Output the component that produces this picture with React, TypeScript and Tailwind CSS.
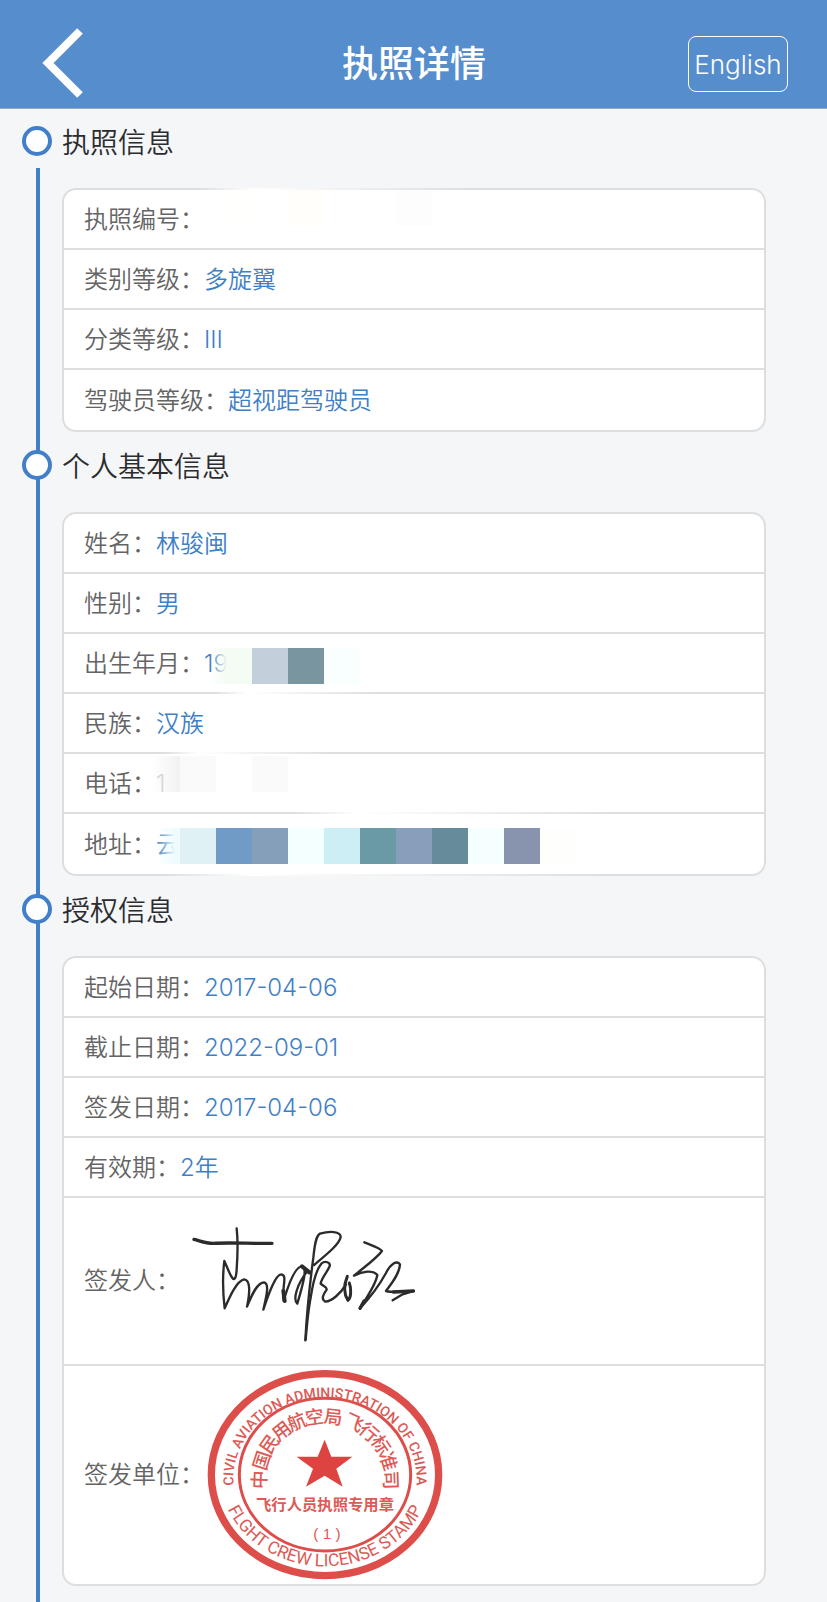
import React from 'react';

type Tile = string | null;

interface Mask {
    tiles: Tile[];
    className: string;
    haze?: string;
}

interface Field {
    label: string;
    value?: string;
    valueClass?: string;
    mask?: Mask;
    smudges?: string[];
    art?: React.ReactNode;
    rowClass?: string;
}

interface Section {
    title: string;
    fields: Field[];
}

function Signature() {
    return (
        <svg viewBox="0 0 780 480" className="w-[260px] h-[160px]" fill="none" stroke="#2b2b2b" strokeLinecap="round" strokeLinejoin="round" role="img" aria-label="签名">
            <path d="M42 115C62 120 76 127 100 127C150 124 210 128 276 127" strokeWidth="10" />
            <path d="M170 82C173 110 174 150 170 205C169 225 166 236 160 234C150 226 143 200 133 180C128 220 129 280 134 322C150 285 170 240 192 235C212 236 210 275 201 317C212 290 230 244 252 244C270 248 258 290 250 326C262 290 285 220 304 220C324 222 304 262 311 299C322 262 344 196 366 196C382 200 372 240 352 308C338 296 350 250 384 208" strokeWidth="7" />
            <path d="M366 196L388 214M310 270L314 300" strokeWidth="12" />
            <path d="M376 418C380 340 392 230 400 170C404 130 408 104 420 98C448 90 482 90 482 108C478 130 440 160 402 192" strokeWidth="7" />
            <path d="M377 416C380 380 386 320 392 290C398 250 410 205 424 188C436 178 452 184 449 196C440 216 424 232 422 248C430 256 442 258 440 266C430 280 422 294 436 302C456 300 480 280 498 250" strokeWidth="7" />
            <path d="M502 226C492 250 490 276 504 298C514 290 514 262 508 246" strokeWidth="9" />
            <path d="M553 124C572 132 600 140 606 150C590 172 556 196 522 224C548 210 580 206 592 222C588 250 560 290 540 322C570 290 596 256 618 216C630 190 650 176 660 190C658 220 634 248 618 270C640 276 672 272 702 270L668 280L638 298" strokeWidth="7" />
            <path d="M540 322L552 300M640 273L700 270" strokeWidth="10" />
        </svg>
    );
}

const SEAL_CHARS: [string, number, number, number][] = [
    ['中', 208, 374, -88],
    ['国', 216, 317, -72],
    ['民', 239, 267, -55],
    ['用', 275, 228, -38],
    ['航', 321, 201, -23],
    ['空', 374, 186, -8],
    ['局', 430, 186, 6],
    ['飞', 492, 203, 25],
    ['行', 537, 232, 40],
    ['标', 573, 270, 56],
    ['准', 595, 319, 73],
    ['司', 602, 375, 88],
];

function Seal() {
    return (
        <svg viewBox="42 45 720 630" className="w-60 h-[210px]" role="img" aria-label="飞行人员执照专用章">
            <defs>
                <path id="seal-top" d="M132 404A275 247 0 1 1 678 404" />
                <path id="seal-bottom" d="M92 400A318 284 0 0 0 718 400" />
            </defs>
            <g fill="none" stroke="#dd4d49">
                <ellipse cx="405" cy="359" rx="341" ry="303" strokeWidth="22" />
                <ellipse cx="405" cy="359" rx="257" ry="229" strokeWidth="9" />
            </g>
            <g fill="#dd5a56" className="font-[Roboto,'Liberation_Sans',sans-serif]" textAnchor="middle" fontWeight="500">
                <text fontSize="42">
                    <textPath href="#seal-top" startOffset="50%">CIVIL AVIATION ADMINISTRATION OF CHINA</textPath>
                </text>
                <text fontSize="52" fontWeight="400">
                    <textPath href="#seal-bottom" startOffset="50%">FLGHT CREW LICENSE STAMP</textPath>
                </text>
            </g>
            <g fill="#dd5a56" textAnchor="middle" fontWeight="500">
                {SEAL_CHARS.map(([char, x, y, angle]) => (
                    <text key={char} fontSize="56" transform={`translate(${x} ${y}) rotate(${angle})`} y="20">{char}</text>
                ))}
                <text x="405" y="466" fontSize="46" fontWeight="700">飞行人员执照专用章</text>
                <text x="411" y="551" fontSize="46" className="font-['Liberation_Sans',sans-serif]">( 1 )</text>
            </g>
            <polygon fill="#dd4441" points="404,254 424,305 487,305 439,341 458,395 404,362 348,395 369,341 320,305 383,305" />
        </svg>
    );
}

const SECTIONS: Section[] = [
    {
        title: '执照信息',
        fields: [
            {
                label: '执照编号',
                smudges: ['left-[135px] -top-[2px] w-[270px]'],
                mask: { className: 'left-[152px] top-0', tiles: ['#fffffd', null, '#fffefa', null, null, '#fdfdfd'] },
            },
            { label: '类别等级', value: '多旋翼' },
            { label: '分类等级', value: 'III' },
            { label: '驾驶员等级', value: '超视距驾驶员' },
        ],
    },
    {
        title: '个人基本信息',
        fields: [
            { label: '姓名', value: '林骏闽' },
            { label: '性别', value: '男' },
            {
                label: '出生年月',
                value: '19',
                smudges: ['left-[150px] -bottom-[2px] w-[164px]'],
                mask: {
                    className: 'left-[146px] top-[14px]',
                    haze: 'w-[42px] bg-linear-to-r from-[#f4fcf4]/0 to-[#f4fcf4] to-40%',
                    tiles: ['#c3cfda', '#79959f', '#f9feff'],
                },
            },
            { label: '民族', value: '汉族' },
            {
                label: '电话',
                value: '1',
                valueClass: 'text-[#c8c8c8]',
                smudges: ['left-[100px] -top-[2px] w-[170px]'],
                mask: {
                    className: 'left-[88px] top-[2px]',
                    haze: 'w-7 bg-linear-to-r from-[#f2f2f2]/0 to-[#f2f2f2]',
                    tiles: ['#fafafa', null, '#fafafa'],
                },
            },
            {
                label: '地址',
                value: '云',
                smudges: ['left-[230px] -top-[2px] w-[320px]', 'left-[100px] -bottom-[2px] w-[440px]'],
                mask: {
                    className: 'left-[92px] top-[14px]',
                    haze: 'w-6 bg-linear-to-r from-[#effbff]/0 to-[#effbff] to-80%',
                    tiles: ['#dff1f5', '#719bc7', '#859fba', '#f4ffff', '#cdeef5', '#6a9aa3', '#889fbc', '#668c9c', '#f5ffff', '#8893ae', '#fefefc'],
                },
            },
        ],
    },
    {
        title: '授权信息',
        fields: [
            { label: '起始日期', value: '2017-04-06' },
            { label: '截止日期', value: '2022-09-01' },
            { label: '签发日期', value: '2017-04-06' },
            { label: '有效期', value: '2年' },
            { label: '签发人', art: <Signature />, rowClass: 'h-[168px]' },
            { label: '签发单位', art: <Seal />, rowClass: 'h-[218px]' },
        ],
    },
];

function MaskTiles({ mask }: { mask: Mask }) {
    return (
        <div className={`absolute flex h-9 ${mask.className}`} aria-hidden="true">
            {mask.haze && <span className={mask.haze} />}
            {mask.tiles.map((color, i) => (
                <span key={i} className="w-9" style={{ backgroundColor: color ?? '#ffffff' }} />
            ))}
        </div>
    );
}

function FieldRow({ field }: { field: Field }) {
    return (
        <div className={`relative flex items-center px-5 border-b-2 border-[#dddee0] last:border-b-0 ${field.rowClass ?? 'h-15 pt-[2px]'}`}>
            <dt className="shrink-0 text-[#646464]">{field.label}：</dt>
            <dd className={field.valueClass ?? 'text-[#3f7fc6]'}>{field.art ?? field.value}</dd>
            {field.smudges?.map((smudge) => (
                <span key={smudge} className={`absolute h-[2px] bg-linear-to-r from-white/0 via-white to-white/0 from-0% via-20% to-100% ${smudge}`} aria-hidden="true" />
            ))}
            {field.mask && <MaskTiles mask={field.mask} />}
        </div>
    );
}

export default function App() {
    return (
        <div className="min-h-screen flex flex-col bg-[#f5f6f8] font-[Inter,'Noto_Sans_CJK_SC',sans-serif]">
            <header className="h-[109px] pt-5 pl-10 pr-[39px] grid grid-cols-[1fr_auto_1fr] items-center bg-[#568dcc] border-b border-[#9aa9bc] text-white">
                <button type="button" aria-label="返回" className="justify-self-start">
                    <svg viewBox="0 0 44 72" className="w-11 h-[72px]" fill="none" stroke="currentColor" strokeWidth="8">
                        <path d="M40 3L8 35L40 67" />
                    </svg>
                </button>
                <h1 className="text-4xl font-medium">执照详情</h1>
                <button type="button" className="justify-self-end h-14 w-25 rounded-lg border border-white text-[26px] font-light">English</button>
            </header>

            <main className="flex flex-1 pb-4 -mt-px">
                <div className="w-1 ml-9 mt-15 -mb-4 shrink-0 bg-[#427fc9]" />
                <div className="flex-1 min-w-0">
                    {SECTIONS.map((section) => (
                        <section key={section.title}>
                            <div className="relative flex items-center gap-[10px] h-[66px] -ml-[18px]">
                                <span className="w-[30px] h-[30px] rounded-full border-4 border-[#427fc9] bg-white" />
                                <h2 className="pt-[3px] text-[28px] leading-10 font-[350] text-[#2b2c2f]">{section.title}</h2>
                            </div>
                            <dl className="mt-[14px] ml-[22px] mr-[61px] border-2 border-[#dddee0] rounded-[14px] bg-white text-2xl font-[350]">
                                {section.fields.map((field) => (
                                    <FieldRow key={field.label} field={field} />
                                ))}
                            </dl>
                        </section>
                    ))}
                </div>
            </main>
        </div>
    );
}
